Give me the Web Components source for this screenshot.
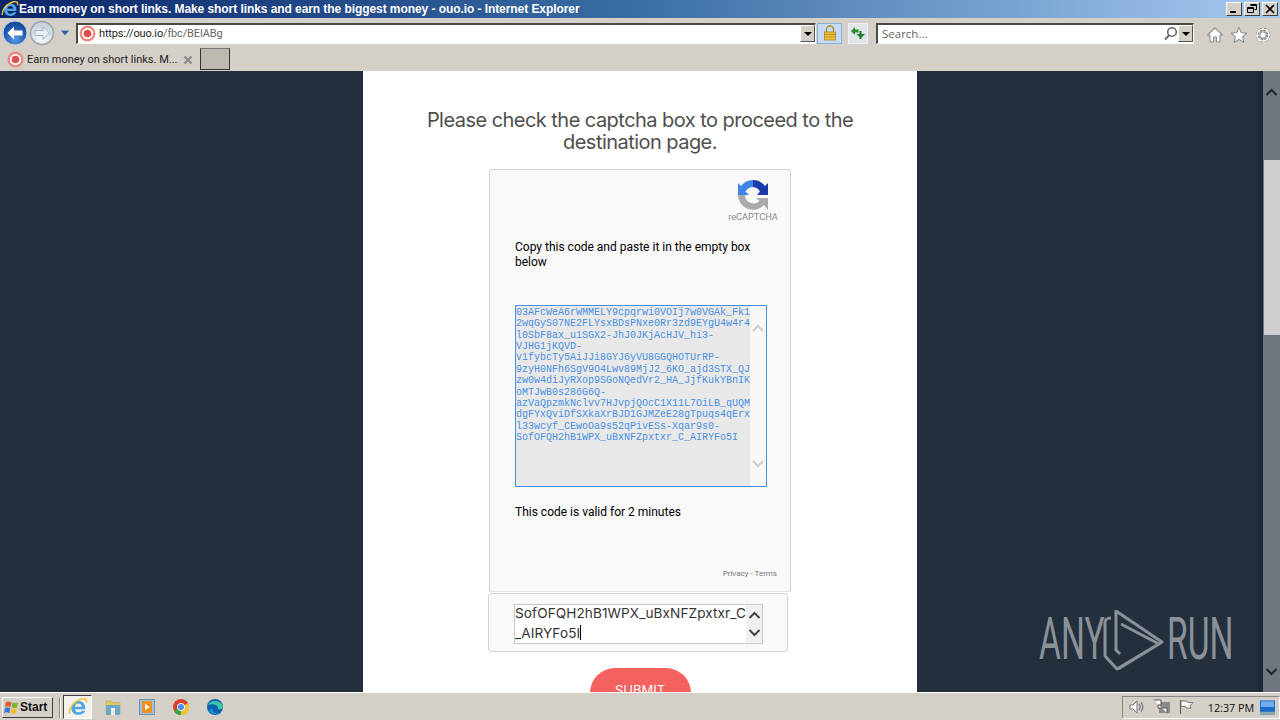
<!DOCTYPE html>
<html>
<head>
<meta charset="utf-8">
<title>ouo.io</title>
<style>
  html, body { margin: 0; height: 100%; overflow: hidden; background: #d4d0c8; }
  body { display: flex; flex-direction: column; height: 720px; }
</style>
</head>
<body>
<ie-titlebar>Earn money on short links. Make short links and earn the biggest money - ouo.io - Internet Explorer</ie-titlebar>
<ie-toolbar url-host="https://ouo.io" url-path="/fbc/BEIABg"></ie-toolbar>
<ie-tabs label="Earn money on short links. M..."></ie-tabs>
<page-view>
  <captcha-column>
    <captcha-card></captcha-card>
    <answer-box></answer-box>
  </captcha-column>
</page-view>
<win-taskbar></win-taskbar>

<script>
const ring = () => `<svg width="17" height="17" viewBox="0 0 17 17"><circle cx="8.5" cy="8.5" r="8" fill="#ec8a88"/><circle cx="8.5" cy="8.5" r="5.600" fill="#fff"/><circle cx="8.5" cy="8.5" r="3.800" fill="#e2504e"/></svg>`;
const ieLogo = `<path d="M9.500 3.500c3.600 0 6 2.600 6 6.200v1.300H6.200c.2 1.800 1.500 2.700 3.300 2.700 1.300 0 2.400-.5 3.300-1.400h2.800c-1.200 2.400-3.400 3.700-6.200 3.700C5.600 16 3 13.400 3 9.800s2.800-6.300 6.500-6.300zm2.900 5.200c-.2-1.700-1.400-2.800-3-2.800s-2.900 1.100-3.200 2.800z" fill="#4ea4e6"/><path d="M1.500 15C.3 11 5 3.500 13 1.800c3-.6 4.400.8 3.400 3.400" fill="none" stroke="#f2c230" stroke-width="1.400"/>`;

class IeTitlebar extends HTMLElement {
  connectedCallback() {
    this.attachShadow({ mode: 'open' });
    this.shadowRoot.innerHTML = `
      <style>
        :host {
          display: flex;
          align-items: center;
          height: 18px;
          flex: none;
          background: linear-gradient(90deg, #0a246a 0%, #3a6ea5 50%, #a6caf0 100%);
          color: #fff;
          font: bold 12px "Liberation Sans", sans-serif;
          letter-spacing: -0.07px;
          padding: 0 2px 0 1px;
          overflow: hidden;
        }
        .text { flex: 1; white-space: nowrap; margin-left: 0; }
        .btns { display: flex; gap: 2px; }
        .btn {
          width: 16px; height: 14px; background: #d4d0c8; box-sizing: border-box;
          border: 1px solid; border-color: #fff #404040 #404040 #fff;
          display: flex; align-items: center; justify-content: center;
        }
        svg { display: block; }
      </style>
      <svg width="18" height="18" viewBox="0 0 18 18">${ieLogo}</svg>
      <span class="text"><slot></slot></span>
      <div class="btns">
        <div class="btn"><svg width="10" height="10"><rect x="1" y="7" width="6" height="2" fill="#000"/></svg></div>
        <div class="btn"><svg width="10" height="10"><path d="M3.500 .5h6v5h-2M.5 3.500h6v5h-6zM.5 4.500h6M3.500 1.500h6" fill="none" stroke="#000"/></svg></div>
        <div class="btn"><svg width="10" height="10"><path d="M1 1l8 8M9 1l-8 8" stroke="#000" stroke-width="1.700"/></svg></div>
      </div>`;
  }
}

class IeToolbar extends HTMLElement {
  connectedCallback() {
    this.attachShadow({ mode: 'open' });
    this.shadowRoot.innerHTML = `
      <style>
        :host {
          display: flex; align-items: center; height: 30px; flex: none; background: #d4d0c8;
          font: 11px "Roboto", sans-serif; color: #222; padding-left: 2px; box-sizing: border-box;
        }
        svg { display: block; flex: none; }
        .field {
          display: flex; align-items: center; height: 21px; box-sizing: border-box; background: #fff;
          border-top: 2px solid #4b4a45; border-left: 2px solid #4b4a45; border-right: 1px solid #fff; border-bottom: 1px solid #fff;
        }
        .arrow { margin-left: 4px; }
        .addr { width: 740px; margin-left: 5px; padding-left: 1px; }
        .addr .url { margin-left: 3px; flex: 1; white-space: nowrap; letter-spacing: -0.15px; }
        .addr .url i { font-style: normal; color: #666; }
        .search { width: 318px; margin-left: 8px; padding-left: 4px; color: #666; font: 11.500px "Open Sans", sans-serif; }
        .search span { flex: 1; }
        .drop {
          width: 15px; height: 17px; background: #d4d0c8; box-sizing: border-box; flex: none;
          border: 1px solid; border-color: #fff #555 #555 #fff; display: flex; align-items: center; justify-content: center;
        }
        .drop::after { content: ''; border: 4px solid transparent; border-top: 4px solid #000; border-bottom: 0; }
        .lock { width: 25px; height: 21px; background: #c6dcf6; border: 1px solid #8ab0dc; box-sizing: border-box; margin-left: 1px; display: flex; align-items: center; justify-content: center; }
        .sync { width: 20px; height: 21px; background: #e0e6e8; border: 1px solid #eef; box-sizing: border-box; margin-left: 6px; display: flex; align-items: center; justify-content: center; }
        .tools { display: flex; gap: 6px; margin-left: 12px; padding-top: 4px; }
      </style>
      <svg width="27" height="26" viewBox="0 0 27 26">
        <defs>
          <radialGradient id="b" cx=".5" cy=".75" r=".8"><stop offset="0" stop-color="#5a9ae4"/><stop offset=".6" stop-color="#1c58b0"/><stop offset="1" stop-color="#123f88"/></radialGradient>
          <radialGradient id="f" cx=".5" cy=".8" r=".8"><stop offset="0" stop-color="#f4f8fb"/><stop offset="1" stop-color="#c0ccd6"/></radialGradient>
        </defs>
        <circle cx="13" cy="13" r="12" fill="url(#b)" stroke="#c4d4e6" stroke-width="1"/>
        <path d="M5.500 13l6.500-6.500v4h8.500v5H12v4z" fill="#fff"/>
      </svg>
      <svg width="26" height="26" viewBox="0 0 26 26">
        <circle cx="13" cy="13" r="11.500" fill="url(#f)" stroke="#9aa6ae" stroke-width="1.500"/>
        <path d="M20.500 13L14 6.500v4H6v5h8v4z" fill="#e8eef3" stroke="#a8b4bf"/>
      </svg>
      <svg class="arrow" width="12" height="10" viewBox="0 0 14 10"><path d="M2 2h10l-5 6z" fill="#2a5ea0" stroke="#9bb9dc" stroke-width=".7"/></svg>
      <div class="field addr">${ring()}<span class="url">${this.getAttribute('url-host')}<i>${this.getAttribute('url-path')}</i></span><div class="drop"></div></div>
      <div class="lock"><svg width="14" height="16" viewBox="0 0 14 16"><path d="M3.500 7V4a3.500 3 0 017 0v3" fill="none" stroke="#b08a20" stroke-width="1.300"/><rect x="1.500" y="7" width="11" height="8" fill="#eec440" stroke="#a88420" stroke-width=".8"/><path d="M1.500 9.500h11M1.500 12h11" stroke="#a88420" stroke-width=".8"/></svg></div>
      <div class="sync"><svg width="16" height="14" viewBox="0 0 16 14"><path d="M1 5l4-4v2.500h3.500v3H5V9z" fill="#2c8a2c"/><path d="M15 8l-3.500 3.500V13h-2v-2L6.500 8h3V5h2v3z" fill="#1e7a2e"/></svg></div>
      <div class="field search"><span>Search...</span>
        <svg width="15" height="15" viewBox="0 0 15 15"><circle cx="9" cy="6" r="4.300" fill="none" stroke="#666" stroke-width="1.600"/><path d="M6 9.500l-4 4" stroke="#666" stroke-width="2"/></svg>
        <div class="drop"></div>
      </div>
      <div class="tools">
        <svg width="18" height="18" viewBox="0 0 18 18"><path d="M1.500 9L9 2l7.500 7H14v7h-3.500v-5h-3v5H4V9z" fill="#fff" stroke="#8b8f90" stroke-width="1.100" stroke-linejoin="round"/></svg>
        <svg width="18" height="18" viewBox="0 0 18 18"><path d="M9 1.500l2.300 5 5.400.6-4 3.700 1.100 5.400L9 13.500l-4.800 2.700 1.100-5.400-4-3.700 5.400-.6z" fill="#fff" stroke="#8b8f90" stroke-width="1.100" stroke-linejoin="round"/></svg>
        <svg width="18" height="18" viewBox="0 0 18 18"><circle cx="9" cy="9" r="5.500" fill="none" stroke="#8b8f90" stroke-width="3.500" stroke-dasharray="2.500 1.800"/><circle cx="9" cy="9" r="6" fill="none" stroke="#fff" stroke-width="1.200"/><circle cx="9" cy="9" r="3.200" fill="#fff" stroke="#8b8f90"/></svg>
      </div>`;
  }
}

class IeTabs extends HTMLElement {
  connectedCallback() {
    this.attachShadow({ mode: 'open' });
    this.shadowRoot.innerHTML = `
      <style>
        :host {
          display: flex; align-items: flex-end; height: 23px; flex: none; background: #d4d0c8; box-sizing: border-box;
          font: 11px "Roboto", sans-serif; color: #222; padding-left: 7px; overflow: hidden;
        }
        .tab { display: flex; align-items: center; height: 22px; width: 193px; box-sizing: border-box; padding-bottom: 1px; }
        .tab span { margin-left: 3px; width: 156px; white-space: nowrap; }
        .new {
          width: 30px; height: 22px; box-sizing: border-box; background: #bdb8b0; margin-bottom: 1px;
          border: 1px solid; border-color: #777 #333 #333 #333;
        }
      </style>
      <div class="tab">${ring()}<span>${this.getAttribute('label')}</span>
        <svg width="10" height="10" viewBox="0 0 10 10"><path d="M1.500 1.500l7 7M8.500 1.500l-7 7" stroke="#888" stroke-width="2"/></svg>
      </div>
      <div class="new"></div>`;
  }
}

class PageView extends HTMLElement {
  connectedCallback() {
    this.attachShadow({ mode: 'open' });
    this.shadowRoot.innerHTML = `
      <style>
        :host { display: flex; flex: none; height: 621px; background: #242f3e; position: relative; overflow: hidden; }
        .main { flex: 1; display: flex; justify-content: center; min-width: 0; padding-left: 17px; box-shadow: inset -5px 0 0 #1f2a38; }
        .bar { width: 17px; flex: none; background: #70767d; display: flex; flex-direction: column; align-items: center; justify-content: space-between; padding: 17px 0 16px; box-sizing: border-box; position: relative; }
        .thumb { position: absolute; top: 89px; left: 1px; right: 0; height: 175px; background: #cfcfcf; }
        .mark {
          position: absolute; right: 51px; bottom: 18px; display: flex; align-items: center; color: #8a9199;
          font: 400 60px/44px "Roboto", sans-serif;
        }
        .mark span { display: block; width: 62px; white-space: nowrap; transform: scaleX(.56); transform-origin: 0 50%; }
        svg { display: block; position: relative; }
      </style>
      <div class="main"><slot></slot></div>
      <div class="bar">
        <div class="thumb"></div>
        <svg width="13" height="8" viewBox="0 0 13 8"><path d="M1.500 7l5-5 5 5" fill="none" stroke="#1d242c" stroke-width="2"/></svg>
        <svg width="13" height="8" viewBox="0 0 13 8"><path d="M1.500 1l5 5 5-5" fill="none" stroke="#1d242c" stroke-width="2"/></svg>
      </div>
      <div class="mark">
        <span>ANY</span>
        <svg width="68" height="64" viewBox="7 5 68 64" style="margin:6px -2px 0 0">
          <path d="M17 13c-4 0-6 1-6 5v33l12 13 45-27L22 6v39l4 4M27 19l38 20-41 25" fill="none" stroke="#8a9199" stroke-width="3" stroke-linejoin="round"/>
        </svg>
        <span>RUN</span>
      </div>`;
  }
}

class CaptchaColumn extends HTMLElement {
  connectedCallback() {
    this.attachShadow({ mode: 'open' });
    this.shadowRoot.innerHTML = `
      <style>
        :host {
          display: flex; flex-direction: column; align-items: center; width: 554px; height: 100%; overflow: hidden;
          background: #fff; box-sizing: border-box; padding-top: 38px;
        }
        h2 { margin: 0 0 16px; width: 460px; text-align: center; font: 400 20px/22px "Inter", sans-serif; letter-spacing: -0.54px; color: #4f4f4f; }
        .btn {
          margin-top: 16px; width: 101px; height: 50px; flex: none; background: #f4625f; border-radius: 25px; color: #fff;
          font: 400 13px/44px "Inter", sans-serif; text-align: center;
        }
      </style>
      <h2>Please check the captcha box to proceed to the destination page.</h2>
      <slot></slot>
      <div class="btn">SUBMIT</div>`;
  }
}

const CODE = [
  '03AFcWeA6rWMMELY9cpqrwi0VOIj7w0VGAk_Fk1',
  '2wqGyS07NE2FLYsxBDsPNxe0Rr3zd9EYgU4w4r4',
  'l0SbF8ax_u1SGX2-JhJ0JKjAcHJV_hi3-',
  'VJHG1jKQVD-',
  'v1fybcTy5AiJJi8GYJ6yVU8GGQHOTUrRP-',
  '9zyH0NFh6SgV9O4Lwv89MjJ2_6KO_ajd3STX_QJ',
  'zw0w4diJyRXop9SGoNQedVr2_HA_JjfKukYBnIK',
  'oMTJwB0s286G6Q-',
  'azVaQpzmkNclvv7HJvpjQOcC1X11L7OiLB_qUQM',
  'dgFYxQviDfSXkaXrBJD1GJMZeE28gTpuqs4qErx',
  'l33wcyf_CEwoOa9s52qPivESs-Xqar9s0-',
  'SofOFQH2hB1WPX_uBxNFZpxtxr_C_AIRYFo5I'
].join('\n');

class CaptchaCard extends HTMLElement {
  connectedCallback() {
    this.attachShadow({ mode: 'open' });
    this.shadowRoot.innerHTML = `
      <style>
        :host {
          display: flex; flex-direction: column; width: 302px; height: 423px; flex: none; box-sizing: border-box;
          background: #f9f9f9; border: 1px solid #d3d3d3; border-radius: 3px 3px 0 0; border-bottom-color: #e6e6e6;
          padding: 10px 12px 0 25px; font: 12px/15px "Roboto", sans-serif; color: #000;
        }
        .logo { align-self: flex-end; display: flex; flex-direction: column; align-items: center; width: 50px; color: #8a8a8a; font-size: 9.200px; line-height: 11px; }
        p { margin: 0; }
        .copy { margin-top: 18px; width: 250px; }
        .box {
          display: flex; width: 252px; height: 182px; margin-top: 35px; flex: none; box-sizing: border-box;
          border: 1px solid #4a90e2; background: #e8e8e8;
        }
        pre { flex: 1; margin: 0; padding: 1px 0 0 0; font: 10px/11.360px "Liberation Mono", monospace; color: #4a90e2; overflow: hidden; }
        .sb { width: 16px; background: #f8f8f8; display: flex; flex-direction: column; align-items: center; justify-content: space-between; padding: 18px 0 18px; box-sizing: border-box; flex: none; }
        .valid { margin-top: 18px; }
        .links { margin: 49px 1px 0 0; text-align: right; font-size: 8px; line-height: 10px; color: #777; }
        svg { display: block; }
      </style>
      <div class="logo">
        <svg width="30" height="30" viewBox="0 0 30 30">
          <path d="M15 0A15 15 0 0 0 3 6L0 3v12h11L7.500 11.500A9 9 0 0 1 15 7z" fill="#3f84e8"/>
          <path d="M15 0a15 15 0 0 1 12 6l3-3v12H19l3-3.500A9 9 0 0 0 15 7z" fill="#1c3aa9"/>
          <path d="M0 15h7a8.500 8.500 0 0 0 14.500 6L18 18h12v12l-4-5A15 15 0 0 1 0 15z" fill="#ababab"/>
        </svg>
        <span style="margin-top:1px">reCAPTCHA</span>
      </div>
      <p class="copy">Copy this code and paste it in the empty box below</p>
      <div class="box">
        <pre>${CODE}</pre>
        <div class="sb">
          <svg width="12" height="8" viewBox="0 0 12 8"><path d="M1 7l5-5 5 5" fill="none" stroke="#ccc" stroke-width="2"/></svg>
          <svg width="12" height="8" viewBox="0 0 12 8"><path d="M1 1l5 5 5-5" fill="none" stroke="#ccc" stroke-width="2"/></svg>
        </div>
      </div>
      <p class="valid">This code is valid for 2 minutes</p>
      <p class="links">Privacy - Terms</p>`;
  }
}

class AnswerBox extends HTMLElement {
  connectedCallback() {
    this.attachShadow({ mode: 'open' });
    this.shadowRoot.innerHTML = `
      <style>
        :host {
          display: flex; width: 300px; height: 59px; flex: none; box-sizing: border-box; margin: 1px 4px 0 0;
          background: #f9f9f9; border: 1px solid #d3d3d3; border-radius: 3px; padding: 10px 24px 0 25px;
        }
        .ta { display: flex; width: 250px; height: 40px; background: #fff; border: 1px solid #c8c8c8; box-sizing: border-box; font: 13.600px/20px "Inter", sans-serif; letter-spacing: 0.09px; color: #333; overflow: hidden; }
        .t { flex: 1; white-space: pre; margin-top: -2px; }
        .caret { display: inline-block; width: 1px; height: 15px; background: #000; vertical-align: -2px; }
        .sb { width: 16px; flex: none; background: #f0f0f0; display: flex; flex-direction: column; align-items: center; justify-content: space-between; padding: 6px 0; box-sizing: border-box; }
        svg { display: block; }
      </style>
      <div class="ta">
        <div class="t">SofOFQH2hB1WPX_uBxNFZpxtxr_C
_AIRYFo5I<span class="caret"></span></div>
        <div class="sb">
          <svg width="13" height="8" viewBox="0 0 13 8"><path d="M1.500 7l5-5 5 5" fill="none" stroke="#444" stroke-width="2"/></svg>
          <svg width="13" height="8" viewBox="0 0 13 8"><path d="M1.500 1l5 5 5-5" fill="none" stroke="#444" stroke-width="2"/></svg>
        </div>
      </div>`;
  }
}

class WinTaskbar extends HTMLElement {
  connectedCallback() {
    this.attachShadow({ mode: 'open' });
    this.shadowRoot.innerHTML = `
      <style>
        :host {
          display: flex; align-items: center; height: 28px; flex: none; box-sizing: border-box; background: #d4d0c8;
          border-top: 1px solid #fff; padding: 1px 0 0 2px; font: 11.500px "Open Sans", sans-serif; color: #111; overflow: hidden;
        }
        .start {
          display: flex; align-items: center; gap: 0; width: 51px; height: 21px; box-sizing: border-box; padding-left: 1px;
          border: 1px solid; border-color: #fff #404040 #404040 #fff; font: bold 12px "Liberation Sans", sans-serif;
        }
        .sep { width: 2px; height: 21px; margin-left: 6px; border-left: 1px solid #888; border-right: 1px solid #fff; box-sizing: border-box; }
        .active {
          width: 29px; height: 24px; margin-left: 2px; box-sizing: border-box; background: #f4f2ee; border: 1px solid; border-color: #404040 #fff #fff #404040;
          display: flex; align-items: center; justify-content: center;
        }
        .apps { display: flex; align-items: center; gap: 18px; margin-left: 12px; flex: 1; padding-left: 1px; }
        .tray {
          display: flex; align-items: center; width: 158px; height: 23px; box-sizing: border-box; padding-left: 6px;
          border: 1px solid; border-color: #888 #fff #fff #888;
        }
        .clock { margin-left: 12px; width: 50px; text-align: center; white-space: nowrap; font-size: 10.800px; }
        svg { display: block; flex: none; }
      </style>
      <div class="start">
        <svg width="16" height="15" viewBox="0 0 16 15"><path d="M2 2c2-1 3.500-.6 5.500.2L6.500 7C4.500 6.200 3 6 1 7z" fill="#e4582c"/><path d="M8.500 2.400c2 .8 3.500 1 5.500 0L13 7.400c-2 1-3.500.7-5.500-.2z" fill="#78b62c"/><path d="M1 8c2-1 3.500-.8 5.300 0L5.300 13C3.500 12 2 12 0 13z" fill="#3a7ad8"/><path d="M7.300 8.300c2 .8 3.500 1 5.500 0L12 13c-2 1-3.500.7-5.700-.1z" fill="#f0c02c"/></svg>
        <span>Start</span>
      </div>
      <div class="sep"></div>
      <div class="active">
        <svg width="20" height="20" viewBox="0 0 18 18">${ieLogo}</svg>
      </div>
      <div class="apps">
        <svg width="16" height="17" viewBox="0 0 16 17"><path d="M1 2h5l1 1.500h8V15H1z" fill="#e6c65e" stroke="#c4a848" stroke-width=".6"/><rect x="1" y="6" width="14" height="10" fill="#6ea6c4"/><rect x="6" y="9" width="4" height="7" fill="#e8eef0"/></svg>
        <svg width="16" height="16" viewBox="0 0 16 16"><rect x=".5" y=".5" width="15" height="15" fill="#9dc0dc" stroke="#6c94b8"/><rect x="3" y="2" width="10" height="12" fill="#f09020"/><path d="M6 5l5 3-5 3z" fill="#fff"/></svg>
        <svg width="16" height="16" viewBox="0 0 16 16"><circle cx="8" cy="8" r="8" fill="#d8402c"/><path d="M8 8L1 12a8 8 0 0 0 7 4z" fill="#2ea84a"/><path d="M8 8l7-4a8 8 0 0 1-3 11.300 8 8 0 0 1-4 .7z" fill="#f4c430"/><circle cx="8" cy="8" r="3.600" fill="#4a8af4" stroke="#fff"/></svg>
        <svg width="16" height="16" viewBox="0 0 16 16"><circle cx="8" cy="8" r="8" fill="#0c62a8"/><path d="M1 6c2-5 12-6 15 1 .3 3-3 4-5 3 1-3-4-6-10-4z" fill="#3cc8a8"/><path d="M5 9c0 4 4 6 8 5-4 3-10 1-11-3z" fill="#1a8ad8"/></svg>
      </div>
      <div class="tray">
        <svg width="16" height="16" viewBox="0 0 16 16"><path d="M1 6h3l4-4v12l-4-4H1z" fill="#fff" stroke="#777"/><path d="M10 5c1.500 2 1.500 4 0 6M12 3.500c2.500 3 2.500 6 0 9" fill="none" stroke="#777" stroke-width="1.200"/></svg>
        <svg width="18" height="16" viewBox="0 0 18 16" style="margin-left:8px"><rect x="6" y="3" width="11" height="11" fill="#8a8a8a"/><path d="M1 1h7v5H5v3h9v5" fill="#fff" stroke="#555"/></svg>
        <svg width="16" height="16" viewBox="0 0 16 16" style="margin-left:7px"><path d="M2.500 1v14" stroke="#666" stroke-width="1.200"/><path d="M3 2h6l1 1.500h5L12 7l1 2H8L7 7.500H3z" fill="#fff" stroke="#777"/></svg>
        <span class="clock">12:37 PM</span>
        <svg width="15" height="15" viewBox="0 0 16 15" style="margin-left:4px"><rect width="16" height="15" fill="#1a6ac8"/><rect x="1" y="1" width="14" height="6" fill="#6fb0ec"/><rect y="12" width="16" height="3" fill="#8aa"/></svg>
      </div>`;
  }
}

customElements.define('ie-titlebar', IeTitlebar);
customElements.define('ie-toolbar', IeToolbar);
customElements.define('ie-tabs', IeTabs);
customElements.define('page-view', PageView);
customElements.define('captcha-column', CaptchaColumn);
customElements.define('captcha-card', CaptchaCard);
customElements.define('answer-box', AnswerBox);
customElements.define('win-taskbar', WinTaskbar);
</script>
</body>
</html>
